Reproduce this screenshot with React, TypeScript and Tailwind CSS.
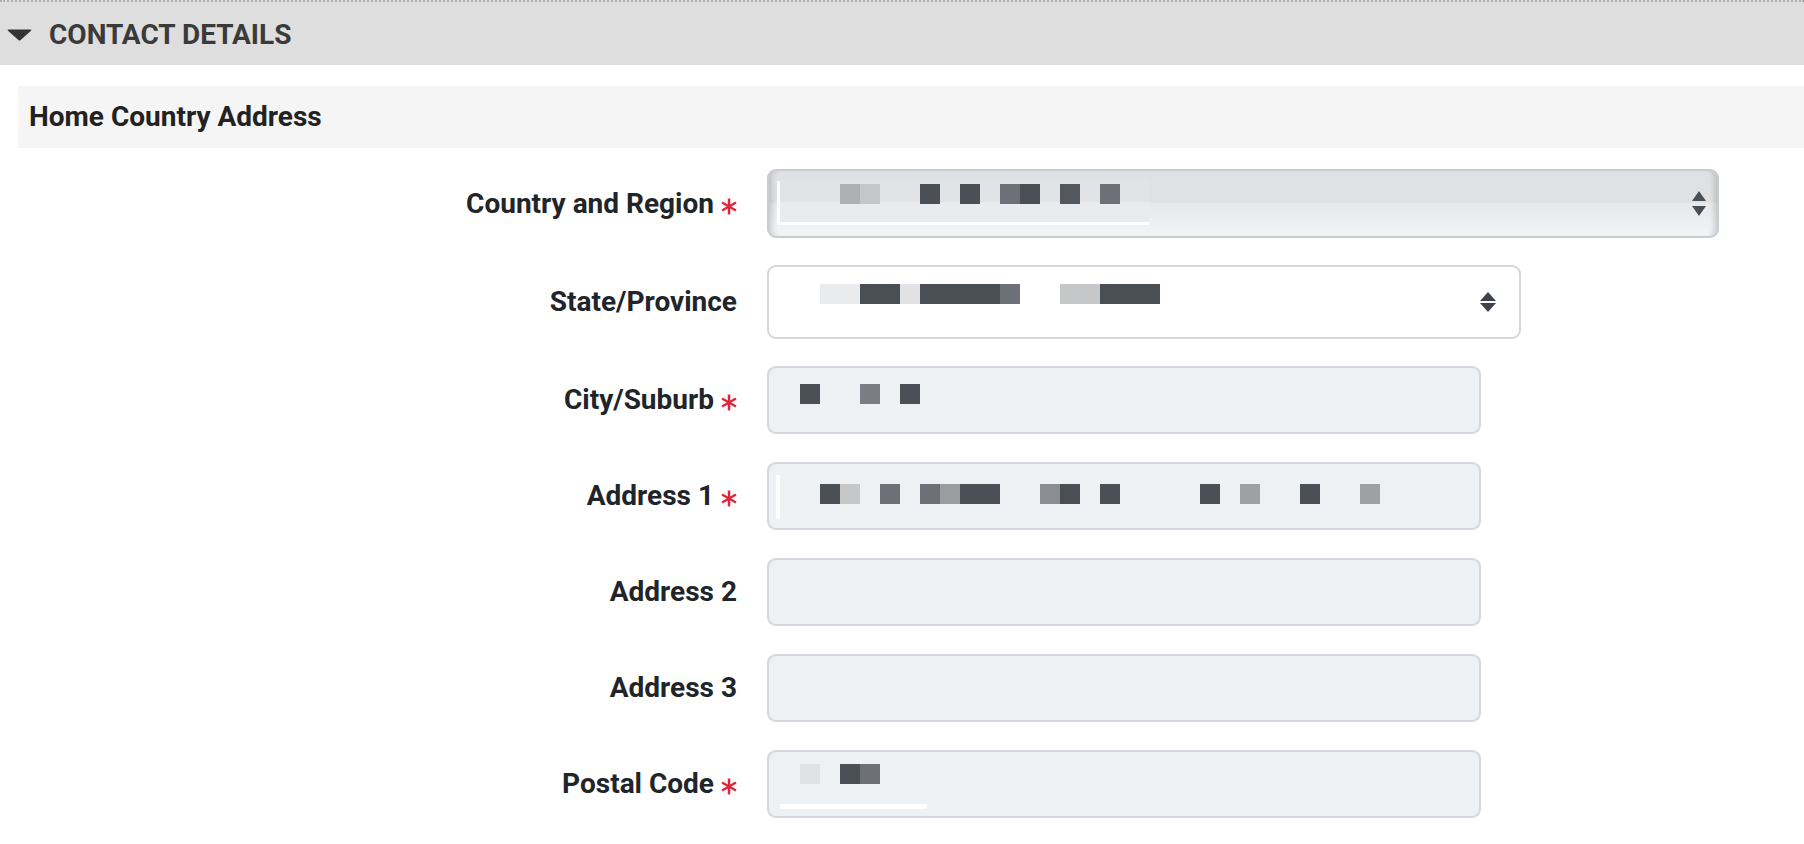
import React from "react";

const cellColor: Record<string, string> = {
  " ": "bg-transparent",
  a: "bg-[#aeb0b3]",
  b: "bg-[#c4c7c9]",
  d: "bg-[#4a4f56]",
  e: "bg-[#53585f]",
  m: "bg-[#6d7177]",
  n: "bg-[#7a7d83]",
  w: "bg-[#e9eaeb]",
  g: "bg-[#e2e2e4]",
  l: "bg-[#c5c7c9]",
  p: "bg-[#9a9da0]",
  q: "bg-[#8a8d92]",
  r: "bg-[#9ea1a4]",
  x: "bg-[#dfe1e5]",
};

// pixelated (redacted) values, one char = one 20px cell
function Mosaic({ cells }: { cells: string }) {
  return (
    <div className="flex h-[20px] shrink-0">
      {cells.split("").map((c, i) => (
        <span key={i} className={`block h-[20px] w-[20px] ${cellColor[c]}`} />
      ))}
    </div>
  );
}

function Asterisk() {
  return (
    <svg width="16" height="17" viewBox="0 0 16 17" className="ml-[7px] mt-[5px] shrink-0">
      <g stroke="#e0263a" strokeWidth="2.5" strokeLinecap="butt">
        <line x1="8" y1="0.5" x2="8" y2="16.5" />
        <line x1="1.07" y1="4.5" x2="14.93" y2="12.5" />
        <line x1="1.07" y1="12.5" x2="14.93" y2="4.5" />
      </g>
    </svg>
  );
}

function Label({ text, required }: { text: string; required?: boolean }) {
  return (
    <div className="flex w-[738px] shrink-0 items-center justify-end pr-[1px]">
      <span className="text-[28px] font-bold leading-none text-[#212529]">{text}</span>
      {required ? <Asterisk /> : null}
    </div>
  );
}

function Row({
  label,
  required,
  children,
}: {
  label: string;
  required?: boolean;
  children: React.ReactNode;
}) {
  return (
    <div className="flex items-center">
      <Label text={label} required={required} />
      <div className="ml-[29px]">{children}</div>
    </div>
  );
}

function TextBox({ children }: { children?: React.ReactNode }) {
  return (
    <div className="flex h-[68px] w-[714px] flex-col rounded-[9px] border-2 border-[#d3d6dc] bg-[#eef1f4]">
      {children}
    </div>
  );
}

export default function App() {
  return (
    <div className="min-h-screen w-full bg-white font-['Roboto',_'Liberation_Sans',_sans-serif]">
      <div className="flex h-[65px] items-center border-t-2 border-dotted border-[#b0b0b0] bg-[#dedede] pt-[3px]">
        <svg width="25" height="12" viewBox="0 0 25 12" className="ml-[7px]">
          <path d="M1.5 0.5 H23.5 Q25 0.5 24 1.8 L13.6 11 Q12.5 12 11.4 11 L1 1.8 Q0 0.5 1.5 0.5 Z" fill="#333333" />
        </svg>
        <span className="ml-[17px] text-[28px] font-bold uppercase leading-none text-[#3a3a3a]">
          Contact Details
        </span>
      </div>

      <div className="ml-[18px] mt-[21px] flex h-[62px] items-center bg-[#f5f5f5] pl-[11px]">
        <span className="text-[28px] font-bold leading-none text-[#222222]">Home Country Address</span>
      </div>

      <div className="mt-[21px] flex flex-col">
        <Row label="Country and Region" required>
          <div className="flex h-[69px] w-[952px] items-start rounded-[9px] border-2 border-[#c9cdd2] bg-[linear-gradient(to_bottom,#dfe1e3_0%,#dfe1e3_48%,#e6e8ea_50%,#f3f4f6_100%)] shadow-[inset_7px_0_6px_-5px_rgba(0,0,0,0.18),inset_-7px_0_6px_-5px_rgba(0,0,0,0.18)]">
            <div className="ml-[8px] mt-[10px] h-[44px] w-[372px] border-b-[3px] border-l-[3px] border-white bg-[linear-gradient(to_bottom,#e1e3e6_0%,#e1e3e6_50%,#e9ecef_50%,#e9ecef_100%)] pl-[60px] pt-[3px]">
              <Mosaic cells="ab  d d md e m" />
            </div>
            <svg width="14" height="25" viewBox="0 0 14 25" className="ml-auto mr-[11px] self-center">
              <polygon points="7,0 14,10 0,10" fill="#4a4f56" />
              <polygon points="0,15 14,15 7,25" fill="#4a4f56" />
            </svg>
          </div>
        </Row>

        <div className="mt-[27px]">
          <Row label="State/Province">
            <div className="flex h-[74px] w-[754px] items-start rounded-[9px] border-2 border-[#d3d6db] bg-white">
              <div className="ml-[51px] mt-[17px]">
                <Mosaic cells="wwddgddddm  llddd" />
              </div>
              <svg width="16" height="20" viewBox="0 0 16 20" className="ml-auto mr-[23px] self-center">
                <polygon points="8,0 16,9 0,9" fill="#3f444a" />
                <polygon points="0,11 16,11 8,20" fill="#3f444a" />
              </svg>
            </div>
          </Row>
        </div>

        <div className="mt-[27px]">
          <Row label="City/Suburb" required>
            <TextBox>
              <div className="ml-[31px] mt-[16px]">
                <Mosaic cells="d  n d" />
              </div>
            </TextBox>
          </Row>
        </div>

        <div className="mt-[28px]">
          <Row label="Address 1" required>
            <TextBox>
              <div className="flex items-start">
                <div className="ml-[7px] mt-[11px] h-[44px] w-[4px] bg-white" />
                <div className="ml-[40px] mt-[20px]">
                  <Mosaic cells="dl m mpdd  qd d    d r  d  r" />
                </div>
              </div>
            </TextBox>
          </Row>
        </div>

        <div className="mt-[28px]">
          <Row label="Address 2">
            <TextBox />
          </Row>
        </div>

        <div className="mt-[28px]">
          <Row label="Address 3">
            <TextBox />
          </Row>
        </div>

        <div className="mt-[28px]">
          <Row label="Postal Code" required>
            <TextBox>
              <div className="ml-[31px] mt-[12px]">
                <Mosaic cells="x dm" />
              </div>
              <div className="ml-[11px] mt-[20px] h-[5px] w-[147px] bg-white" />
            </TextBox>
          </Row>
        </div>
      </div>
    </div>
  );
}
